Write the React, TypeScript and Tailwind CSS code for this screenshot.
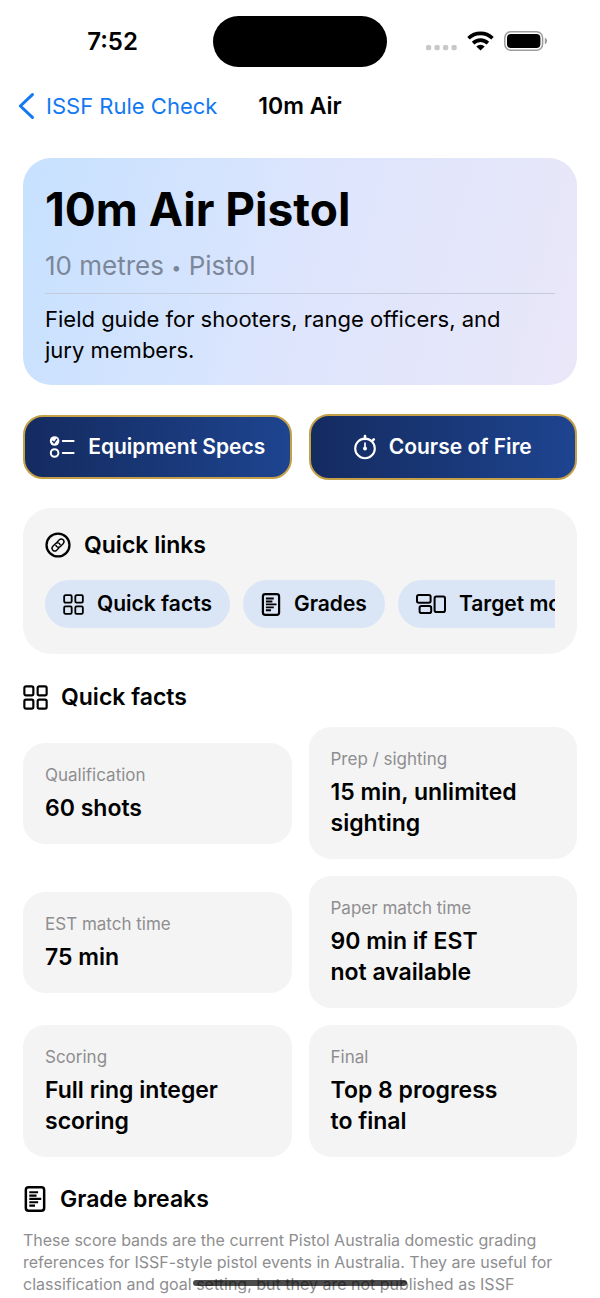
import type { ReactNode } from "react";

type IconProps = { className?: string };

function GridIcon({ className }: IconProps) {
  return (
    <svg viewBox="0 0 22 22" className={className} fill="none" stroke="currentColor" strokeWidth="1.9" aria-hidden="true">
      <rect x="1.2" y="1.2" width="7.9" height="7.9" rx="1.4" />
      <rect x="12.9" y="1.2" width="7.9" height="7.9" rx="1.4" />
      <rect x="1.2" y="12.9" width="7.9" height="7.9" rx="1.4" />
      <rect x="12.9" y="12.9" width="7.9" height="7.9" rx="1.4" />
    </svg>
  );
}

function DocIcon({ className }: IconProps) {
  return (
    <svg viewBox="0 0 20 25" className={className} fill="none" stroke="currentColor" strokeWidth="2.4" aria-hidden="true">
      <rect x="1.2" y="1.2" width="17.6" height="22.6" rx="2.6" />
      <path d="M4.5 6h8.5M4.5 9.2h7M4.5 12.4h11.5M4.5 15.6h8.5M4.5 18.8h5.5" strokeWidth="2.1" />
    </svg>
  );
}

function TargetModeIcon({ className }: IconProps) {
  return (
    <svg viewBox="0 0 30 20" className={className} fill="none" stroke="currentColor" strokeWidth="2" aria-hidden="true">
      <rect x="1" y="1" width="13.6" height="7.8" rx="1.8" />
      <rect x="3.6" y="12" width="11.6" height="7" rx="1.8" />
      <rect x="18.6" y="2.6" width="10.4" height="15.4" rx="1.8" />
    </svg>
  );
}

function LinkCircleIcon({ className }: IconProps) {
  return (
    <svg viewBox="0 0 24 24" className={className} fill="none" stroke="currentColor" aria-hidden="true">
      <circle cx="12" cy="12" r="10.6" strokeWidth="2.1" />
      <g strokeWidth="1.3" strokeLinecap="round" transform="translate(12 12) rotate(-45)">
        <path d="M-1.2 2.5H-4.2a2.5 2.5 0 0 1 0-5H-.6a2.5 2.5 0 0 1 2.2 3.7" />
        <path d="M1.2-2.5H4.2a2.5 2.5 0 0 1 0 5H.6a2.5 2.5 0 0 1-2.2-3.7" />
      </g>
    </svg>
  );
}

function ChecklistIcon({ className }: IconProps) {
  return (
    <svg viewBox="0 0 26 22" className={className} fill="none" stroke="currentColor" strokeWidth="2" strokeLinecap="round" aria-hidden="true">
      <circle cx="5.6" cy="5" r="4.8" fill="currentColor" stroke="none" />
      <path d="M3.6 5.3l1.5 1.7L7.8 3.2" stroke="#17306b" strokeWidth="1.3" />
      <circle cx="5.6" cy="17" r="3.8" />
      <path d="M13.8 5H24.6M13.8 17H24.6" />
    </svg>
  );
}

function StopwatchIcon({ className }: IconProps) {
  return (
    <svg viewBox="0 0 22 26" className={className} fill="none" stroke="currentColor" strokeWidth="2.1" strokeLinecap="round" aria-hidden="true">
      <circle cx="11" cy="14.4" r="9.8" />
      <path d="M11 2v3M18.8 6.4l1-1" strokeWidth="2.6" />
      <path d="M11 9v5" strokeWidth="1.7" />
      <circle cx="11" cy="14.6" r="2" fill="currentColor" stroke="none" />
    </svg>
  );
}

function StatusBar() {
  return (
    <div className="grid grid-cols-[1fr_174px_1fr] items-center pt-4">
      <div className="pl-3 text-center text-2xl leading-8 font-semibold">7:52</div>
      <div className="h-[51px] rounded-full bg-black" />
      <div className="flex items-center justify-center gap-[10px] pr-[14px] pb-[2px]">
        <svg viewBox="0 0 31 20" className="h-5 w-[31px] text-[#c8c8c8]" fill="currentColor" aria-hidden="true">
          <rect x="0" y="14" width="5.2" height="5.2" rx="1.6" />
          <rect x="8.5" y="14" width="5.2" height="5.2" rx="1.6" />
          <rect x="17" y="14" width="5.2" height="5.2" rx="1.6" />
          <rect x="25.5" y="14" width="5.2" height="5.2" rx="1.6" />
        </svg>
        <svg viewBox="0 0 27 20" className="h-5 w-[27px]" fill="none" stroke="currentColor" strokeWidth="3.6" aria-hidden="true">
          <path d="M1.5 7.3a17.2 17.2 0 0 1 24 0" />
          <path d="M6.1 12.1a10.6 10.6 0 0 1 14.8 0" />
          <path d="M13.5 19.6l-4.2-4.2a6 6 0 0 1 8.4 0z" fill="currentColor" stroke="none" />
        </svg>
        <svg viewBox="0 0 44 20" className="h-5 w-11" aria-hidden="true">
          <rect x="0.8" y="0.8" width="37.8" height="18.4" rx="6" fill="none" stroke="#9c9c9c" strokeWidth="1.5" />
          <rect x="3" y="3" width="33.4" height="14" rx="4" fill="#000" />
          <path d="M40.8 6.8c3 1 3 5.4 0 6.4z" fill="#9c9c9c" />
        </svg>
      </div>
    </div>
  );
}

function Heading({ icon, children }: { icon: ReactNode; children: ReactNode }) {
  return (
    <h2 className="flex items-center gap-[13px] text-[23px] leading-8 font-semibold">
      {icon}
      {children}
    </h2>
  );
}

function ActionButton({ icon, tall, children }: { icon: ReactNode; tall?: boolean; children: ReactNode }) {
  return (
    <button
      type="button"
      className={`flex items-center justify-center gap-[13px] rounded-[20px] border-2 border-[#c4a048] bg-linear-to-r from-[#142b60] to-[#1e4490] text-[21px] leading-7 font-semibold whitespace-nowrap text-white ${tall ? "h-[66px]" : "h-16"}`}
    >
      {icon}
      {children}
    </button>
  );
}

function Chip({ href, icon, children }: { href: string; icon: ReactNode; children: ReactNode }) {
  return (
    <a
      href={href}
      className="flex h-12 shrink-0 items-center gap-[13px] rounded-full bg-[#dae6f5] px-[18px] text-[21px] leading-7 font-semibold whitespace-nowrap"
    >
      {icon}
      {children}
    </a>
  );
}

const facts = [
  { label: "Qualification", value: "60 shots" },
  { label: "Prep / sighting", value: "15 min, unlimited sighting" },
  { label: "EST match time", value: "75 min" },
  { label: "Paper match time", value: "90 min if EST not\u00a0available" },
  { label: "Scoring", value: "Full ring integer scoring" },
  { label: "Final", value: "Top 8 progress to\u00a0final" },
];

export default function App() {
  return (
    <div className="min-h-screen bg-white font-['Inter',sans-serif] text-black">
      <StatusBar />

      <header className="mt-[15px] grid h-12 grid-cols-[1fr_auto_1fr] items-center px-[18px] text-[23px] leading-8">
        <a href="#back" className="flex items-center gap-3 text-[22px] whitespace-nowrap text-[#1279f2]">
          <svg viewBox="0 0 16 26" className="h-[26px] w-4" fill="none" stroke="currentColor" strokeWidth="3" strokeLinecap="round" strokeLinejoin="round" aria-hidden="true">
            <path d="M14.4 1.6L2.4 13l12 11.4" />
          </svg>
          ISSF Rule Check
        </a>
        <div className="font-semibold">10m Air</div>
      </header>

      <main className="px-[23px] pt-7">
        <section className="rounded-[28px] bg-linear-[105deg] from-[#c6e1ff] via-[#dde5fd] to-[#eae7f8] px-[22px] pt-[23px] pb-[19px]">
          <h1 className="text-[46px] leading-[56px] font-bold">10m Air Pistol</h1>
          <p className="mt-[11px] text-[26px] leading-9 text-[#7c8799]">
            10 metres <span className="align-middle text-lg">•</span> Pistol
          </p>
          <hr className="mt-[9px] mb-[10px] border-[#c3cbdd]" />
          <p className="text-[22px] leading-[31px]">Field guide for shooters, range officers, and jury&nbsp;members.</p>
        </section>

        <div className="mt-[29px] grid grid-cols-2 items-center gap-[17px]">
          <ActionButton icon={<ChecklistIcon className="h-[22px] w-[26px]" />}>Equipment Specs</ActionButton>
          <ActionButton tall icon={<StopwatchIcon className="h-[26px] w-[22px]" />}>Course of Fire</ActionButton>
        </div>

        <section className="mt-7 rounded-[28px] bg-[#f4f4f4] px-[22px] pt-[21px] pb-[26px]">
          <Heading icon={<LinkCircleIcon className="size-[26px]" />}>Quick links</Heading>
          <nav className="mt-[19px] flex gap-[13px] overflow-x-auto [scrollbar-width:none]">
            <Chip href="#facts" icon={<GridIcon className="size-[21px]" />}>Quick facts</Chip>
            <Chip href="#grades" icon={<DocIcon className="h-[23px] w-5" />}>Grades</Chip>
            <Chip href="#modes" icon={<TargetModeIcon className="h-5 w-[30px]" />}>Target modes</Chip>
          </nav>
        </section>

        <section id="facts" className="mt-[27px]">
          <Heading icon={<GridIcon className="size-[25px]" />}>Quick facts</Heading>
          <dl className="mt-[14px] grid grid-cols-2 items-center gap-[17px]">
            {facts.map((fact) => (
              <div key={fact.label} className="rounded-[22px] bg-[#f4f4f4] px-[22px] pt-[21px] pb-5">
                <dt className="text-[17px] leading-[22px] text-[#8e8e90]">{fact.label}</dt>
                <dd className="mt-[7px] text-[23px] leading-[31px] font-semibold">{fact.value}</dd>
              </div>
            ))}
          </dl>
        </section>

        <section id="grades" className="mt-[26px]">
          <Heading icon={<DocIcon className="h-[26px] w-6" />}>Grade breaks</Heading>
          <p className="mt-[14px] text-base leading-[22px] text-[#8e8e90]">
            These score bands are the current Pistol Australia domestic grading references for ISSF-style pistol events in Australia. They are useful for classification and goal setting, but they are not published as ISSF
          </p>
        </section>
      </main>

      <div className="fixed bottom-3 left-1/2 h-[6px] w-[214px] -translate-x-1/2 rounded-full bg-black/70" />
    </div>
  );
}
